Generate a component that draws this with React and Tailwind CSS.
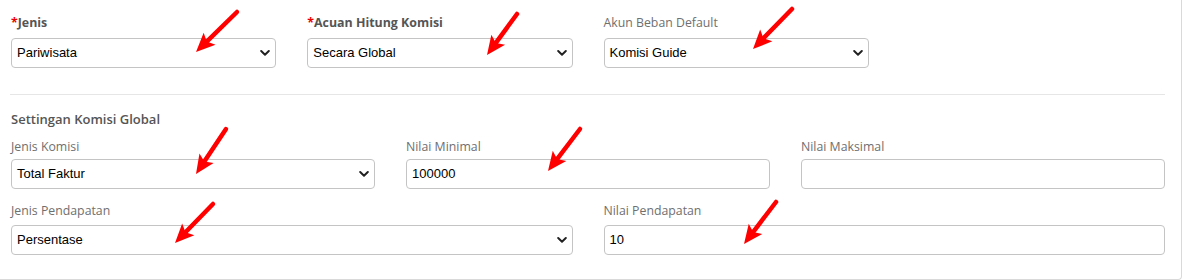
import React from "react";

const arrows = [
  [237, 12, 196, 52],
  [517, 14, 487, 55],
  [792, 9, 753, 49],
  [226, 129, 196, 174],
  [580, 129, 548, 171],
  [213, 204, 175, 243],
  [776, 202, 744, 244],
];

function Arrow({ x1, y1, x2, y2 }) {
  const dx = x2 - x1;
  const dy = y2 - y1;
  const len = Math.hypot(dx, dy);
  const ux = dx / len;
  const uy = dy / len;
  const nx = -uy;
  const ny = ux;
  const L = 19;
  const W = 8.5;
  const bx = x2 - ux * L;
  const by = y2 - uy * L;
  const mx = x2 - ux * (L - 4);
  const my = y2 - uy * (L - 4);
  const pts = [
    [x2, y2],
    [bx + nx * W, by + ny * W],
    [mx, my],
    [bx - nx * W, by - ny * W],
  ]
    .map((p) => p.join(","))
    .join(" ");
  return (
    <g>
      <line x1={x1} y1={y1} x2={mx} y2={my} stroke="#ff0000" strokeWidth="4.5" strokeLinecap="round" />
      <polygon points={pts} fill="#ff0000" />
    </g>
  );
}

function Chevron() {
  return (
    <svg width="10" height="7" viewBox="0 0 10 7" className="absolute right-[5px] top-1/2 -translate-y-1/2 pointer-events-none">
      <path d="M1.2 1.5 L5 5.2 L8.8 1.5" fill="none" stroke="#222" strokeWidth="2" strokeLinecap="round" strokeLinejoin="round" />
    </svg>
  );
}

const openSans = { fontFamily: '"Open Sans", sans-serif' };
const arial = { fontFamily: '"Liberation Sans", Arial, sans-serif' };

function Label({ children, required, mb = "mb-[6px]" }) {
  if (required) {
    return (
      <div className={`text-[12.4px] leading-[18px] font-bold text-[#555] ${mb}`} style={openSans}>
        <span className="text-[#e00]">*</span>
        {children}
      </div>
    );
  }
  return (
    <div className={`text-[12.3px] leading-[18px] text-[#6f6f6f] ${mb}`} style={openSans}>
      {children}
    </div>
  );
}

function SelectBox({ value }) {
  return (
    <div className="relative h-[30px] border border-[#c4c4c4] rounded-[4px] bg-white flex items-center pl-[5px] text-[13px] text-black" style={arial}>
      {value}
      <Chevron />
    </div>
  );
}

function InputBox({ value }) {
  return (
    <div className="h-[30px] border border-[#c4c4c4] rounded-[4px] bg-white flex items-center pl-[5px] text-[13px] text-black" style={arial}>
      {value}
    </div>
  );
}

export default function App() {
  return (
    <div className="relative w-[1182px] h-[280px] bg-white overflow-hidden">
      <div className="w-[1182px] h-[280px] border-r border-b border-[#d9d9d9] rounded-br-[4px] bg-white">
        <div className="ml-[11px] w-[1154px] pt-[14px]">
          <div className="grid grid-cols-4 gap-x-[31px]">
            <div>
              <Label required>Jenis</Label>
              <SelectBox value="Pariwisata" />
            </div>
            <div>
              <Label required>Acuan Hitung Komisi</Label>
              <SelectBox value="Secara Global" />
            </div>
            <div>
              <Label>Akun Beban Default</Label>
              <SelectBox value="Komisi Guide" />
            </div>
            <div />
          </div>
          <div className="mt-[26px] h-px bg-[#e6e6e6] -ml-px" />
          <div className="mt-[15px] text-[13px] leading-[18px] font-semibold text-[#555]" style={openSans}>
            Settingan Komisi Global
          </div>
          <div className="mt-[10px] grid grid-cols-3 gap-x-[31px]">
            <div>
              <Label mb="mb-[3px]">Jenis Komisi</Label>
              <SelectBox value="Total Faktur" />
            </div>
            <div>
              <Label mb="mb-[3px]">Nilai Minimal</Label>
              <InputBox value="100000" />
            </div>
            <div>
              <Label mb="mb-[3px]">Nilai Maksimal</Label>
              <InputBox value="" />
            </div>
          </div>
          <div className="mt-[13px] grid grid-cols-2 gap-x-[31px]">
            <div>
              <Label mb="mb-[5px]">Jenis Pendapatan</Label>
              <SelectBox value="Persentase" />
            </div>
            <div>
              <Label mb="mb-[5px]">Nilai Pendapatan</Label>
              <InputBox value="10" />
            </div>
          </div>
        </div>
      </div>
      <svg width="1182" height="280" className="absolute inset-0 pointer-events-none">
        {arrows.map(([a, b, c, d], i) => (
          <Arrow key={i} x1={a} y1={b} x2={c} y2={d} />
        ))}
      </svg>
    </div>
  );
}
